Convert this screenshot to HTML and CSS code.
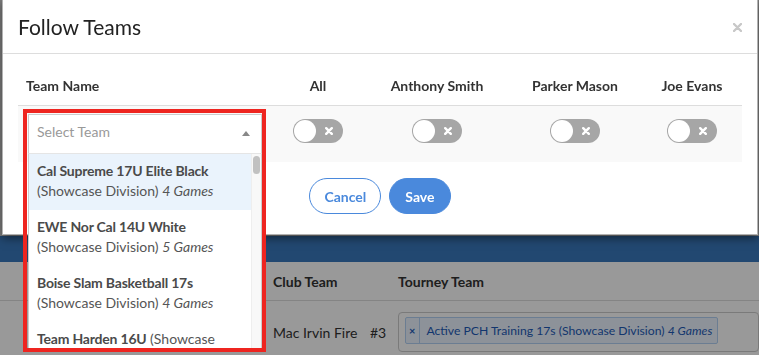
FILE: index.html
```html
<!DOCTYPE html>
<html lang="en">
<head>
    <meta charset="UTF-8">
    <meta name="viewport" content="width=device-width, initial-scale=1.0">
    <title>Follow Teams</title>
    <link rel="stylesheet" href="styles.css">
</head>
<body>

<div class="page">
    <div class="page-top"></div>
    <div class="page-nav"></div>
    <div class="roster">
        <div class="roster-head">
            <div></div>
            <div class="roster-cell">Club Team</div>
            <div class="roster-cell">Tourney Team</div>
        </div>
        <div class="roster-row">
            <div></div>
            <div class="roster-cell">Mac Irvin Fire <span class="jersey">#3</span></div>
            <div class="roster-cell">
                <div class="tag-input">
                    <span class="tag">
                        <span class="tag-remove">×</span>
                        <span class="tag-label">Active PCH Training 17s (Showcase Division) <i>4 Games</i></span>
                    </span>
                </div>
            </div>
        </div>
    </div>
</div>

<div class="backdrop"></div>

<div class="modal">
    <div class="modal-header">
        <h4 class="modal-title">Follow Teams</h4>
        <a href="#" class="close">
            <svg width="9" height="9" viewBox="0 0 9 9"><path d="M1 1 L8 8 M8 1 L1 8" stroke="currentColor" stroke-width="2.4" stroke-linecap="round"/></svg>
        </a>
    </div>
    <div class="modal-body">
        <table class="follow-table">
            <thead>
                <tr>
                    <th class="col-team">Team Name</th>
                    <th class="col-all">All</th>
                    <th class="col-player">Anthony Smith</th>
                    <th class="col-player2">Parker Mason</th>
                    <th class="col-player3">Joe Evans</th>
                </tr>
            </thead>
            <tbody>
                <tr>
                    <td class="col-team">
                        <div class="picker">
                            <div class="picker-select">
                                <span class="placeholder">Select Team</span>
                                <span class="caret-up"></span>
                            </div>
                            <div class="picker-menu">
                                <div class="picker-option active"><b>Cal Supreme 17U Elite Black</b> (Showcase Division) <i>4 Games</i></div>
                                <div class="picker-option"><b>EWE Nor Cal 14U White</b> (Showcase Division) <i>5 Games</i></div>
                                <div class="picker-option"><b>Boise Slam Basketball 17s</b> (Showcase Division) <i>4 Games</i></div>
                                <div class="picker-option"><b>Team Harden 16U</b> (Showcase Division) <i>3 Games</i></div>
                                <div class="scrollbar"><div class="scrollbar-thumb"></div></div>
                            </div>
                        </div>
                    </td>
                    <td><span class="switch"><span class="knob"></span><span class="switch-x"><svg width="8" height="8" viewBox="0 0 8 8"><path d="M1.2 1.2 L6.8 6.8 M6.8 1.2 L1.2 6.8" stroke="#fff" stroke-width="2.4" stroke-linecap="round"/></svg></span></span></td>
                    <td><span class="switch"><span class="knob"></span><span class="switch-x"><svg width="8" height="8" viewBox="0 0 8 8"><path d="M1.2 1.2 L6.8 6.8 M6.8 1.2 L1.2 6.8" stroke="#fff" stroke-width="2.4" stroke-linecap="round"/></svg></span></span></td>
                    <td><span class="switch"><span class="knob"></span><span class="switch-x"><svg width="8" height="8" viewBox="0 0 8 8"><path d="M1.2 1.2 L6.8 6.8 M6.8 1.2 L1.2 6.8" stroke="#fff" stroke-width="2.4" stroke-linecap="round"/></svg></span></span></td>
                    <td><span class="switch"><span class="knob"></span><span class="switch-x"><svg width="8" height="8" viewBox="0 0 8 8"><path d="M1.2 1.2 L6.8 6.8 M6.8 1.2 L1.2 6.8" stroke="#fff" stroke-width="2.4" stroke-linecap="round"/></svg></span></span></td>
                </tr>
            </tbody>
        </table>
        <div class="modal-actions">
            <a href="#" class="btn btn-outline">Cancel</a>
            <a href="#" class="btn btn-primary">Save</a>
        </div>
    </div>
</div>

</body>
</html>
```

FILE: styles.css
```css
body {
    margin: 0;
    font-family: Lato, "Open Sans", sans-serif;
    font-size: 14px;
    color: #333;
    overflow: hidden;
}

/* page behind the modal */
.page {
    width: 759px;
    height: 355px;
    background-color: #fff;
}

.page-top {
    height: 236px;
    background-color: #d4d4d4;
}

.page-nav {
    height: 26px;
    background-color: #3a78bd;
}

.roster-head,
.roster-row {
    display: grid;
    grid-template-columns: 265px 125px 1fr;
    align-items: center;
}

.roster-head {
    height: 38px;
    border-bottom: 1px solid #ddd;
    font-weight: bold;
}

.roster-row {
    padding-top: 11px;
}

.roster-cell {
    padding-left: 8px;
    white-space: nowrap;
}

.jersey {
    margin-left: 9px;
}

.tag-input {
    border: 1px solid #ccc;
    border-radius: 4px;
    padding: 4px 6px;
    height: 40px;
    box-sizing: border-box;
}

.tag {
    display: inline-flex;
    align-items: stretch;
    height: 27px;
    box-sizing: border-box;
    background-color: #ebf4ff;
    border: 1px solid #b3d1f3;
    border-radius: 2px;
    color: #1e5bb8;
    font-size: 12.2px;
}

.tag-remove {
    display: flex;
    align-items: center;
    padding: 0 4px 0 3px;
    font-size: 11px;
    font-weight: bold;
    border-right: 1px solid #b3d1f3;
}

.tag-label {
    display: block;
    line-height: 25px;
    padding: 0 5px 0 6px;
}

.backdrop {
    position: fixed;
    top: 0;
    left: 0;
    right: 0;
    bottom: 0;
    background-color: rgba(0, 0, 0, 0.4);
}

/* modal */
.modal {
    position: absolute;
    top: -1px;
    left: 2px;
    width: 756px;
    box-sizing: border-box;
    background-color: #fff;
    border: 1px solid rgba(0, 0, 0, 0.3);
    box-shadow: 0 3px 9px rgba(0, 0, 0, 0.5);
}

.modal-header {
    display: flex;
    justify-content: space-between;
    align-items: center;
    padding: 16px 15px 15px;
    border-bottom: 1px solid #ddd;
}

.modal-title {
    margin: 0;
    font-size: 21px;
    line-height: 22px;
    font-weight: normal;
    color: #222;
}

.close {
    display: block;
    color: #c8c8c8;
    line-height: 0;
}

.modal-body {
    padding: 15px 15px 20px;
}

.follow-table {
    width: 724px;
    border-collapse: collapse;
    table-layout: fixed;
}

.follow-table th {
    padding: 7px 8px 9px;
    line-height: 20px;
    text-align: center;
    font-weight: bold;
    color: #333;
    border-bottom: 1px solid #ddd;
    white-space: nowrap;
}

.follow-table th.col-team {
    text-align: left;
    width: 236px;
}

.col-all { width: 80px; }
.col-player { width: 126px; }
.col-player2 { width: 118px; }
.col-player3 { width: 84px; }

.follow-table td {
    padding: 8px;
    vertical-align: top;
    background-color: #f9f9f9;
}

.follow-table td.col-team {
    padding-left: 10px;
}

/* team dropdown */
.picker {
    position: relative;
    height: 40px;
}

.picker::after {
    content: "";
    position: absolute;
    top: -5px;
    left: -5px;
    right: -4px;
    height: 243px;
    border: 4px solid #ee2520;
    box-sizing: border-box;
    z-index: 3;
}

.picker-select {
    height: 40px;
    box-sizing: border-box;
    display: flex;
    align-items: center;
    padding: 0 8px 5px;
    background-color: #fff;
    border: 1px solid #ccc;
    border-bottom-color: #e5e5e5;
}

.placeholder {
    flex: 1;
    color: #999;
}

.caret-up {
    width: 0;
    height: 0;
    margin: 4px 3px 0 0;
    border-left: 4px solid transparent;
    border-right: 4px solid transparent;
    border-bottom: 5px solid #888;
}

.picker-menu {
    position: absolute;
    top: 40px;
    left: 0;
    right: 0;
    height: 194px;
    overflow: hidden;
    background-color: #fff;
    border-left: 1px solid #ccc;
    border-right: 1px solid #ccc;
    z-index: 2;
}

.picker-option {
    padding: 7px 19px 9px 8px;
    line-height: 20px;
    color: #555;
}

.picker-option b {
    color: #4a4a4a;
    letter-spacing: -0.2px;
}

.picker-option.active {
    background-color: #eaf3fc;
}

.scrollbar {
    position: absolute;
    top: 0;
    right: 0;
    bottom: 0;
    width: 9px;
    background-color: #f8f8f8;
    border-left: 1px solid #eee;
}

.scrollbar-thumb {
    margin: 2px 0 0 1px;
    width: 7px;
    height: 18px;
    border-radius: 4px;
    background-color: #c1c1c1;
}

/* switches */
.switch {
    display: flex;
    align-items: center;
    width: 50px;
    height: 24px;
    margin: 5px auto 0;
    padding: 1px;
    box-sizing: border-box;
    border-radius: 12px;
    background-color: #a6a6a6;
}

.knob {
    width: 22px;
    height: 22px;
    border-radius: 50%;
    background-color: #fff;
}

.switch-x {
    flex: 1;
    display: flex;
    justify-content: center;
    padding-right: 1px;
}

/* footer buttons */
.modal-actions {
    display: flex;
    justify-content: center;
    gap: 8px;
    margin-top: 16px;
}

.btn {
    display: inline-flex;
    align-items: center;
    height: 36px;
    box-sizing: border-box;
    padding: 0 15px;
    border-radius: 18px;
    font-weight: bold;
    text-decoration: none;
}

.btn-outline {
    padding: 0 14px;
    border: 1px solid #4a89dc;
    color: #4a89dc;
    background-color: #fff;
}

.btn-primary {
    border: 1px solid #4a89dc;
    background-color: #4a89dc;
    color: #fff;
}
```
